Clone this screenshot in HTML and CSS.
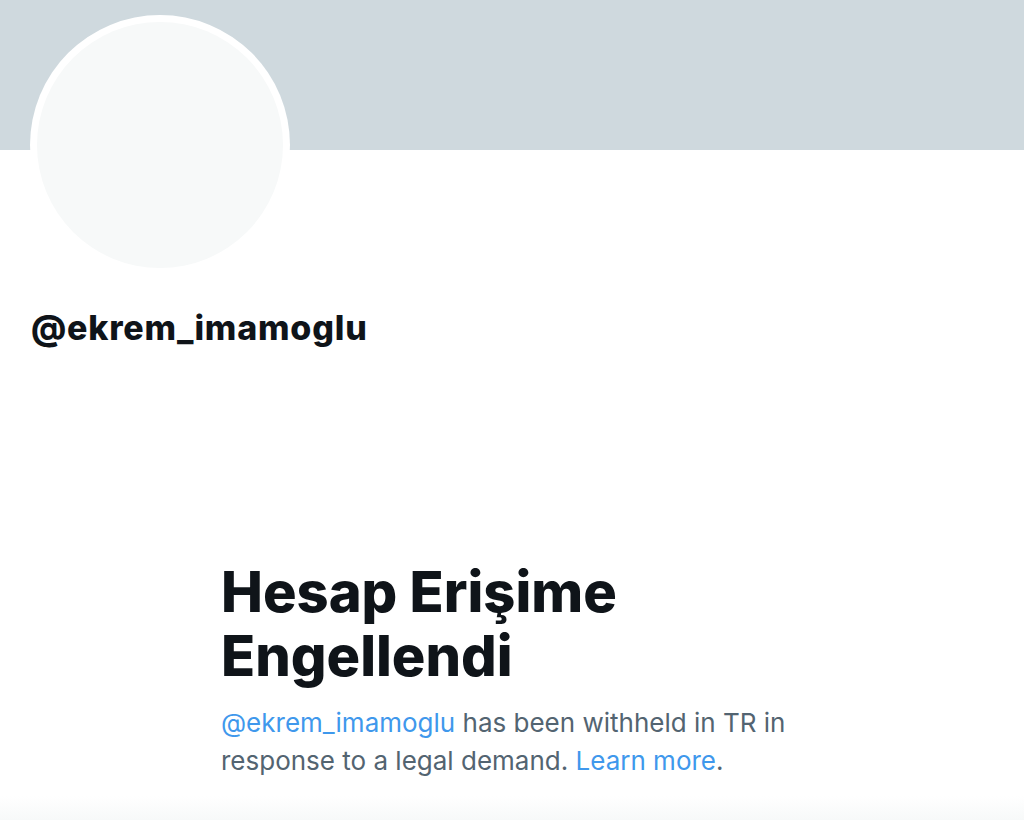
FILE: index.html
```html
<!DOCTYPE html>
<html lang="tr">
<head>
<meta charset="utf-8">
<link rel="stylesheet" href="styles.css">
</head>
<body>
<div class="page">
  <div class="banner"></div>
  <div class="profile">
    <div class="avatar"><div class="avatar-inner"></div></div>
    <div class="handle">@ekrem_imamoglu</div>
  </div>
  <div class="notice">
    <h1 class="notice-title">Hesap Erişime Engellendi</h1>
    <p class="notice-text"><a class="link" href="#">@ekrem_imamoglu</a> has been withheld in TR in response to a legal demand. <a class="link" href="#">Learn more</a>.</p>
  </div>
  <div class="bottom-fade"></div>
</div>
</body>
</html>
```
FILE: styles.css
```css
html, body {
  margin: 0;
  padding: 0;
  background: #ffffff;
}
.page {
  width: 1024px;
  height: 820px;
  overflow: hidden;
  display: flex;
  flex-direction: column;
  font-family: Inter, "Noto Sans", sans-serif;
}
.banner {
  height: 150px;
  background: #cfd9de;
  flex-shrink: 0;
}
.profile {
  padding-left: 30px;
  display: flex;
  flex-direction: column;
}
.avatar {
  width: 260px;
  height: 260px;
  margin-top: -135px;
  border-radius: 50%;
  background: #ffffff;
  padding: 7px;
  box-sizing: border-box;
}
.avatar-inner {
  width: 100%;
  height: 100%;
  border-radius: 50%;
  background: #f7f9f9;
}
.handle {
  margin-top: 33px;
  margin-left: 1px;
  font-size: 34px;
  font-weight: 800;
  letter-spacing: 0.8px;
  color: #0f1419;
  line-height: 40px;
}
.notice {
  margin-left: 221px;
  margin-top: 212px;
  width: 590px;
}
.notice-title {
  margin: 0;
  width: 420px;
  font-size: 56px;
  line-height: 64px;
  font-weight: 800;
  color: #0f1419;
}
.notice-text {
  margin: 16px 0 0;
  font-size: 26px;
  line-height: 38px;
  color: #536471;
}
.link {
  color: #3f98ec;
  text-decoration: none;
}
.bottom-fade {
  margin-top: auto;
  height: 24px;
  background: linear-gradient(#ffffff, #f7f9f9);
}
```
